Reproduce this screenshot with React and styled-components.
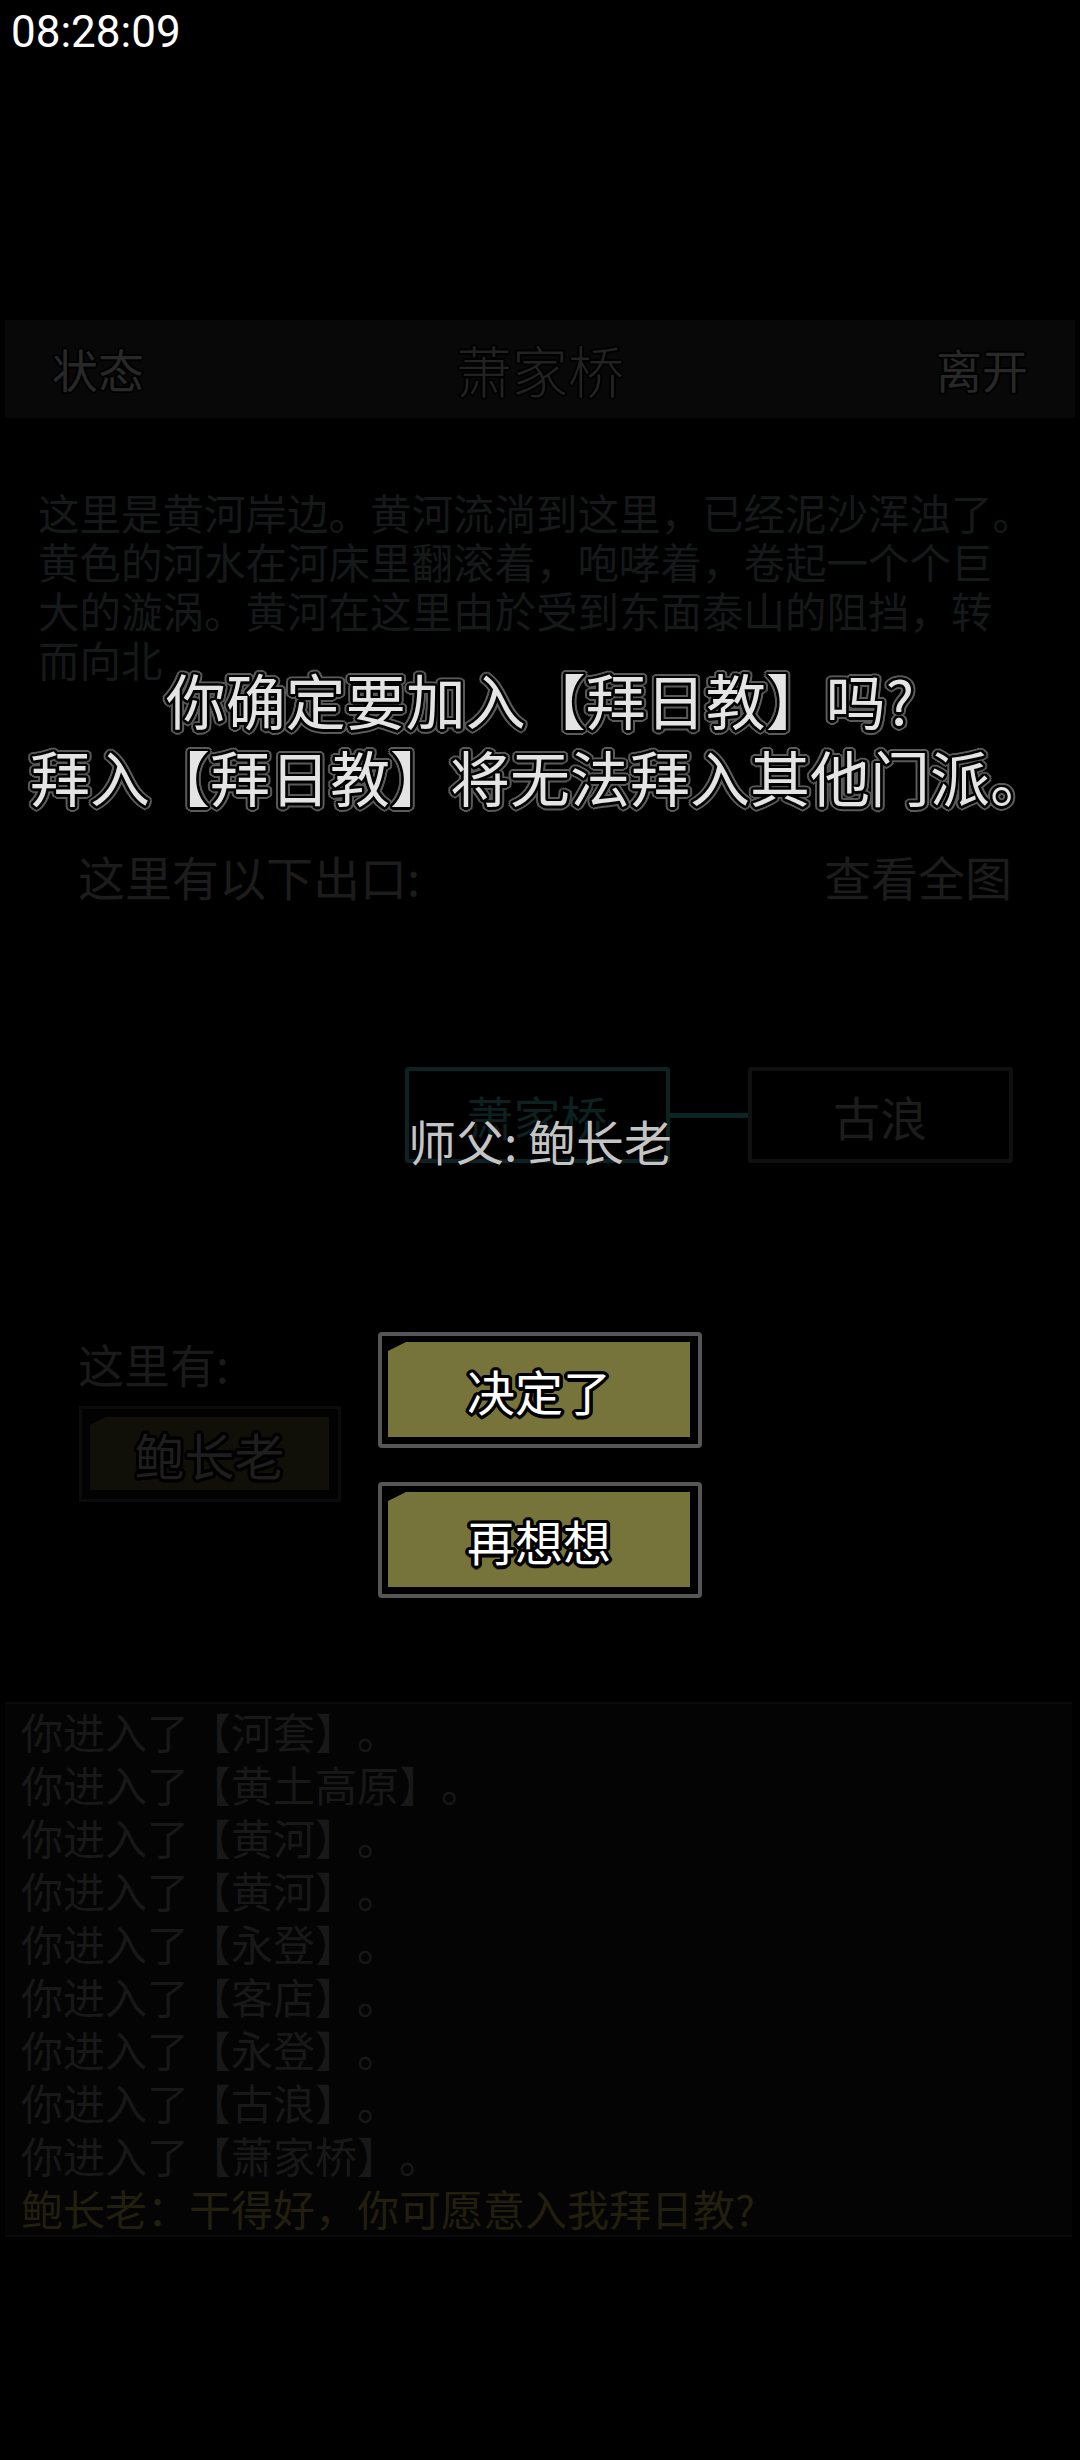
import React from "react";
import styled, { createGlobalStyle } from "styled-components";

const ring = (r, color, steps = 16) =>
  Array.from({ length: steps }, (_, i) => {
    const a = (i / steps) * Math.PI * 2;
    return `${(Math.cos(a) * r).toFixed(2)}px ${(Math.sin(a) * r).toFixed(2)}px 0 ${color}`;
  }).join(", ");

const CJK = `"Noto Sans CJK SC", "Noto Sans", sans-serif`;

const GlobalStyle = createGlobalStyle`
  html, body {
    margin: 0;
    padding: 0;
    background: #000;
  }
  body {
    font-family: ${CJK};
    text-spacing-trim: space-all;
  }
`;

const Screen = styled.div`
  position: relative;
  width: 1080px;
  height: 2460px;
  background: #000;
  overflow: hidden;
`;

const StatusBar = styled.div`
  height: 320px;
  box-sizing: border-box;
  padding: 10px 11px;
  font-family: Roboto, "Liberation Sans", sans-serif;
  font-size: 44px;
  line-height: 44px;
  color: #fff;
`;

const HeaderBar = styled.div`
  margin: 0 5px;
  height: 98px;
  padding: 0 47px;
  background: #080808;
  display: grid;
  grid-template-columns: 1fr auto 1fr;
  align-items: center;
`;

const HeaderItem = styled.div`
  font-size: ${(p) => (p.$big ? "56px" : "46px")};
  color: ${(p) => (p.$big ? "#222" : "#282828")};
  font-weight: ${(p) => (p.$big ? 300 : 400)};
  text-align: ${(p) => p.$align || "left"};
  line-height: 1.2;
  text-shadow: ${ring(2, "#000", 8)};
`;

const MainPanel = styled.div`
  height: 1270px;
  margin: 2px 24px 0 24px;
  box-sizing: border-box;
  padding-top: 68px;
`;

const Description = styled.div`
  padding-left: 14px;
  font-size: 41.5px;
  line-height: 49px;
  color: #151919;
`;

const DescLine = styled.div`
  white-space: nowrap;
`;

const ExitsRow = styled.div`
  margin-top: 164px;
  padding: 0 44px 0 54px;
  display: flex;
  justify-content: space-between;
  font-size: 47px;
  line-height: 56px;
  color: #1c1c1c;
`;

const MapRow = styled.div`
  margin-top: 163px;
  display: flex;
  justify-content: center;
  align-items: center;
  margin-left: -6px;
`;

const RoomCell = styled.div`
  width: 265px;
  height: 96px;
  box-sizing: border-box;
  border: 4px solid ${(p) => p.$border};
  border-radius: 3px;
  display: flex;
  align-items: center;
  justify-content: center;
  font-size: 47px;
  color: ${(p) => p.$color};
  visibility: ${(p) => (p.$empty ? "hidden" : "visible")};
`;

const Link = styled.div`
  width: 78px;
  height: 5px;
  background: ${(p) => (p.$empty ? "transparent" : "#0d2424")};
`;

const HereLabel = styled.div`
  margin-top: 172px;
  padding-left: 54px;
  font-size: 46px;
  line-height: 56px;
  color: #1a1a1a;
`;

const NpcButton = styled.div`
  margin: 15px 0 0 55px;
  width: 262px;
  height: 96px;
  box-sizing: border-box;
  border: 3px solid #0b0b0b;
  padding: 8px 9px 9px 8px;
  background: #020202;
`;

const NpcFace = styled.div`
  height: 100%;
  background: #101009;
  clip-path: polygon(0 8px, 16px 0, 100% 0, 100% 100%, 0 100%);
  display: flex;
  align-items: center;
  justify-content: center;
  font-size: 50px;
  color: #1e1e1e;
  text-shadow: ${ring(3, "#000", 12)};
`;

const LogPanel = styled.div`
  margin: 12px 8px 0 5px;
  height: 535px;
  box-sizing: border-box;
  border-top: 2px solid #0a0a0a;
  border-bottom: 2px solid #0a0a0a;
  background: #040404;
  padding: 0 0 0 16px;
`;

const LogLine = styled.div`
  font-size: 42px;
  line-height: 53px;
  white-space: nowrap;
  color: ${(p) => (p.$npc ? "#221f0d" : "#181818")};
`;

const Modal = styled.div`
  position: absolute;
  inset: 0;
  display: flex;
  flex-direction: column;
  align-items: center;
  padding-top: 660px;
`;

const Prompt = styled.div`
  font-size: 60px;
  line-height: 77px;
  color: #e4e4e4;
  text-align: center;
  white-space: nowrap;
  text-shadow: ${ring(2.5, "#000")}, ${ring(4.5, "#5a5a5a")};
`;

const Master = styled.div`
  margin-top: 299px;
  font-size: 48px;
  line-height: 54px;
  color: #c4c4c4;
  text-shadow: 0 0 2px #000;
`;

const ChoiceList = styled.div`
  margin-top: 165px;
  display: flex;
  flex-direction: column;
  gap: 34px;
`;

const Choice = styled.div`
  width: 324px;
  height: 116px;
  box-sizing: border-box;
  border: 4px solid #565656;
  border-radius: 4px;
  background: #000;
  padding: 6px 8px 7px 6px;
`;

const ChoiceFace = styled.div`
  height: 100%;
  background: #76743b;
  clip-path: polygon(0 9px, 18px 0, 100% 0, 100% 100%, 0 100%);
  display: flex;
  align-items: center;
  justify-content: center;
  font-size: 48px;
  color: #fff;
  text-shadow: ${ring(3.5, "#000", 16)};
`;

const descLines = [
  "这里是黄河岸边。黄河流淌到这里，已经泥沙浑浊了。",
  "黄色的河水在河床里翻滚着，咆哮着，卷起一个个巨",
  "大的漩涡。黄河在这里由於受到东面泰山的阻挡，转",
  "而向北",
];

const logLines = ["河套", "黄土高原", "黄河", "黄河", "永登", "客店", "永登", "古浪", "萧家桥"];

export default function App() {
  return (
    <>
      <GlobalStyle />
      <Screen>
        <StatusBar>08:28:09</StatusBar>
        <HeaderBar>
          <HeaderItem>状态</HeaderItem>
          <HeaderItem $big $align="center">萧家桥</HeaderItem>
          <HeaderItem $align="right">离开</HeaderItem>
        </HeaderBar>
        <MainPanel>
          <Description>
            {descLines.map((l, i) => (
              <DescLine key={i}>{l}</DescLine>
            ))}
          </Description>
          <ExitsRow>
            <span>这里有以下出口:</span>
            <span>查看全图</span>
          </ExitsRow>
          <MapRow>
            <RoomCell $empty />
            <Link $empty />
            <RoomCell $border="#0d2323" $color="#0d2121">萧家桥</RoomCell>
            <Link />
            <RoomCell $border="#101010" $color="#1c1c1c">古浪</RoomCell>
          </MapRow>
          <HereLabel>这里有:</HereLabel>
          <NpcButton>
            <NpcFace>鲍长老</NpcFace>
          </NpcButton>
        </MainPanel>
        <LogPanel>
          {logLines.map((name, i) => (
            <LogLine key={i}>你进入了【{name}】。</LogLine>
          ))}
          <LogLine $npc>鲍长老：干得好，你可愿意入我拜日教?</LogLine>
        </LogPanel>

        <Modal>
          <Prompt>
            你确定要加入【拜日教】吗?
            <br />
            拜入【拜日教】将无法拜入其他门派。
          </Prompt>
          <Master>师父: 鲍长老</Master>
          <ChoiceList>
            <Choice>
              <ChoiceFace>决定了</ChoiceFace>
            </Choice>
            <Choice>
              <ChoiceFace>再想想</ChoiceFace>
            </Choice>
          </ChoiceList>
        </Modal>
      </Screen>
    </>
  );
}
